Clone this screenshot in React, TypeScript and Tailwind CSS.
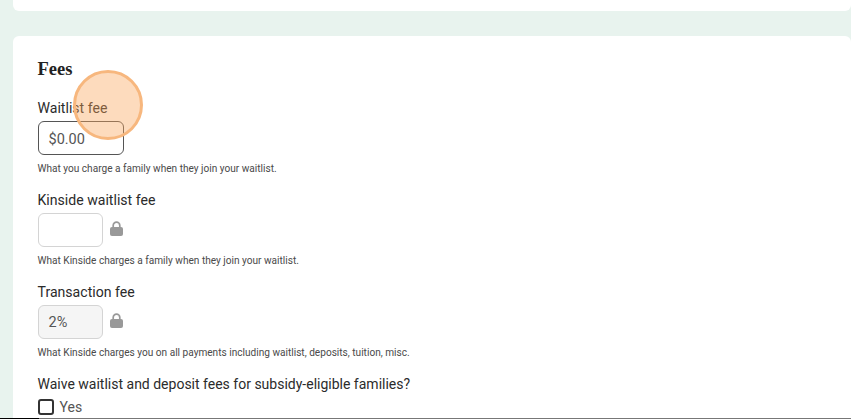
const labelClass = "text-[14.1px] leading-[20px] text-[#2b2b2b]";
const hintClass = "text-[10.1px] leading-[14px] text-[#4a4a4a]";

function LockIcon() {
  return (
    <svg width="13" height="15" viewBox="0 0 13 15" className="ml-[7px] mb-[3px]">
      <path d="M3.2 7V4.4a3.3 3.3 0 0 1 6.6 0V7" fill="none" stroke="#999" strokeWidth="1.7" />
      <rect x="0" y="6" width="13" height="9" rx="2" fill="#999" />
    </svg>
  );
}

export default function App() {
  return (
    <div className="relative w-[851px] h-[419px] overflow-hidden bg-[#e8f3ee] font-['Roboto','Liberation_Sans',sans-serif]">
      <div className="h-[11px] ml-[13px] bg-white rounded-b-[6px]" />
      <div className="mt-[25px] ml-[13px] h-[382px] bg-white rounded-t-[6px] pl-[24.5px] pt-[22px]">
        <h2 className="font-['Liberation_Serif',serif] font-bold text-[18.5px] leading-[22px] text-[#222]">Fees</h2>
        <div className={`mt-[18px] ${labelClass}`}>Waitlist fee</div>
        <div className="mt-[3px] w-[86px] h-[34px] rounded-[6px] border border-[#555] flex items-center pl-[10px] pt-[3px] text-[14.5px] text-[#555]">$0.00</div>
        <p className={`mt-[7px] ${hintClass}`}>What you charge a family when they join your waitlist.</p>

        <div className={`mt-[14px] ${labelClass}`}>Kinside waitlist fee</div>
        <div className="mt-[3px] flex items-center">
          <div className="w-[65px] h-[34px] rounded-[6px] border border-[#d4d4d4]" />
          <LockIcon />
        </div>
        <p className={`mt-[7px] ${hintClass}`}>What Kinside charges a family when they join your waitlist.</p>

        <div className={`mt-[14px] ${labelClass}`}>Transaction fee</div>
        <div className="mt-[3px] flex items-center">
          <div className="w-[65px] h-[34px] rounded-[6px] border border-[#d4d4d4] bg-[#f5f5f5] flex items-center pl-[10px] pt-[2px] text-[14.5px] text-[#555]">2%</div>
          <LockIcon />
        </div>
        <p className={`mt-[7px] ${hintClass}`}>What Kinside charges you on all payments including waitlist, deposits, tuition, misc.</p>

        <div className="mt-[14px] text-[14px] leading-[20px] text-[#2b2b2b]">Waive waitlist and deposit fees for subsidy-eligible families?</div>
        <label className="mt-[3px] flex items-center">
          <span className="w-[16px] h-[16px] rounded-[3px] border-2 border-[#333] bg-white" />
          <span className="ml-[6px] text-[14px] leading-[20px] text-[#555]">Yes</span>
        </label>
      </div>
      <div className="absolute left-[73px] top-[70px] w-[70px] h-[70px] rounded-full bg-[#f9a55b]/40 border-[3px] border-[#f7b77e]" />
      <div className="absolute left-0 bottom-0 w-full h-px bg-[#777]" />
      <div className="absolute left-0 bottom-0 w-[39px] h-px bg-black" />
    </div>
  );
}
